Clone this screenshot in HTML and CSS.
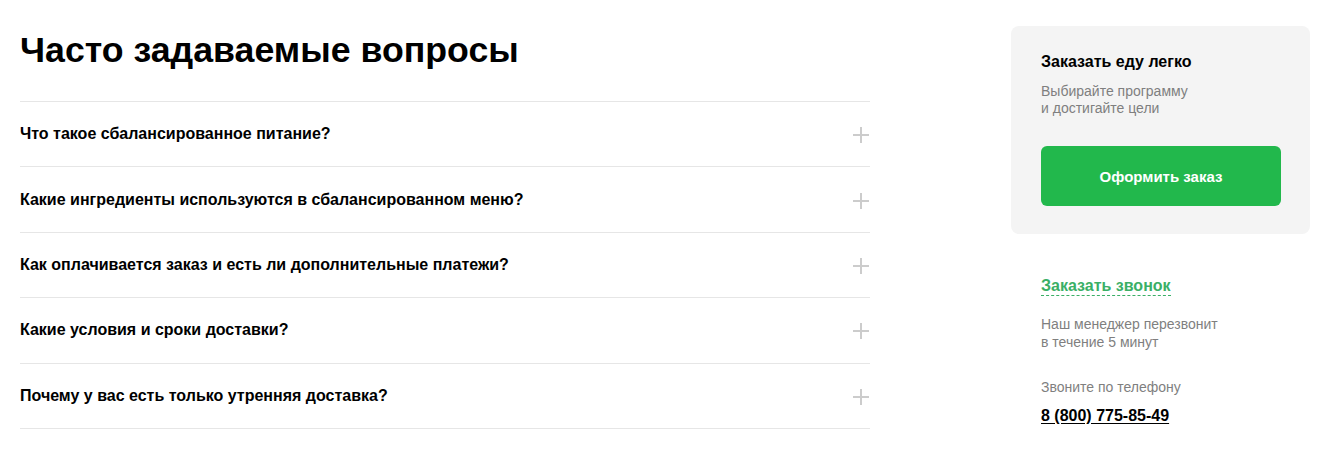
FILE: index.html
```html
<!DOCTYPE html>
<html lang="ru">
<head>
<meta charset="utf-8">
<link rel="stylesheet" href="styles.css">
</head>
<body>
<div class="page">
  <main class="faq">
    <h1 class="faq-title">Часто задаваемые вопросы</h1>
    <ul class="faq-list">
      <li class="faq-item"><span>Что такое сбалансированное питание?</span><i class="plus"></i></li>
      <li class="faq-item"><span>Какие ингредиенты используются в сбалансированном меню?</span><i class="plus"></i></li>
      <li class="faq-item"><span>Как оплачивается заказ и есть ли дополнительные платежи?</span><i class="plus"></i></li>
      <li class="faq-item"><span>Какие условия и сроки доставки?</span><i class="plus"></i></li>
      <li class="faq-item"><span>Почему у вас есть только утренняя доставка?</span><i class="plus"></i></li>
    </ul>
  </main>
  <aside class="side">
    <div class="card">
      <div class="card-title">Заказать еду легко</div>
      <div class="card-text">Выбирайте программу<br>и достигайте цели</div>
      <a class="btn">Оформить заказ</a>
    </div>
    <div class="contact">
      <a class="call-link">Заказать звонок</a>
      <div class="muted">Наш менеджер перезвонит<br>в течение 5 минут</div>
      <div class="muted phone-label">Звоните по телефону</div>
      <a class="phone">8 (800) 775-85-49</a>
    </div>
  </aside>
</div>
</body>
</html>
```

FILE: styles.css
```css
* { box-sizing: border-box; }
body {
  margin: 0;
  background: #fff;
  font-family: "Liberation Sans", Arial, sans-serif;
  color: #000;
}
.page {
  display: flex;
  gap: 141px;
  padding: 26px 0 0 20px;
}
.faq { width: 850px; }
.faq-title {
  margin: 2px 0 0;
  font-size: 35.7px;
  line-height: 44px;
  font-weight: 700;
  height: 73px;
}
.faq-list {
  list-style: none;
  margin: 0;
  padding: 0;
  border-top: 1px solid #e6e6e6;
}
.faq-item {
  display: flex;
  align-items: center;
  justify-content: space-between;
  height: 65.4px;
  border-bottom: 1px solid #e6e6e6;
  font-size: 16px;
  font-weight: 700;
  padding-right: 1px;
}
.plus {
  position: relative;
  width: 16px;
  height: 16px;
  margin-top: 2px;
}
.plus::before, .plus::after {
  content: "";
  position: absolute;
  background: #cccccc;
}
.plus::before { left: 0; right: 0; top: 7px; height: 2px; }
.plus::after { top: 0; bottom: 0; left: 7px; width: 2px; }
.side { width: 299px; }
.card {
  background: #f4f4f4;
  border-radius: 8px;
  padding: 26px 29px 28px 30px;
}
.card-title {
  font-size: 16px;
  font-weight: 700;
  line-height: 20px;
}
.card-text {
  margin-top: 11px;
  font-size: 14px;
  line-height: 17px;
  color: #7f7f7f;
}
.btn {
  display: flex;
  align-items: center;
  justify-content: center;
  margin-top: 29px;
  height: 60px;
  width: 240px;
  background: #22b84c;
  border-radius: 6px;
  color: #fff;
  font-size: 15px;
  font-weight: 700;
}
.contact { padding: 42px 0 0 30px; }
.call-link {
  display: inline-block;
  color: #3aaf66;
  font-size: 16px;
  font-weight: 700;
  line-height: 19px;
  border-bottom: 1px dashed #3aaf66;
}
.muted {
  color: #7f7f7f;
  font-size: 14px;
  line-height: 18px;
}
.contact .muted:first-of-type { margin-top: 19px; }
.phone-label { margin-top: 27px; }
.phone {
  display: inline-block;
  margin-top: 11px;
  color: #000;
  font-size: 16px;
  font-weight: 700;
  text-decoration: underline;
  text-underline-offset: 2px;
}
```
